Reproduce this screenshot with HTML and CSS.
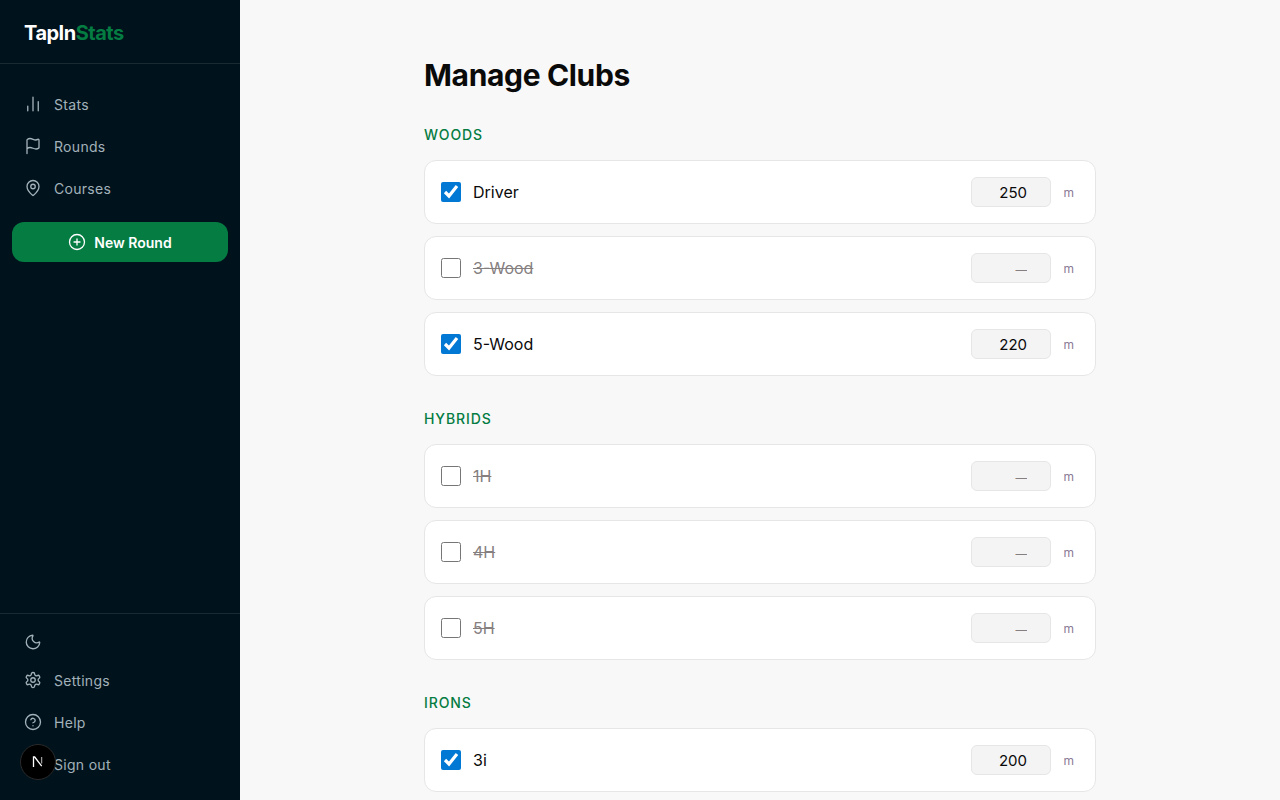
FILE: index.html
```html
<!DOCTYPE html>
<html lang="en">
<head>
<meta charset="utf-8">
<title>Manage Clubs</title>
<link rel="stylesheet" href="styles.css">
</head>
<body>
<aside class="sidebar">
  <div class="brand"><span class="brand-a">TapIn</span><span class="brand-b">Stats</span></div>
  <nav class="nav">
    <a class="nav-item"><svg class="icon" viewBox="0 0 24 24"><path d="M5 21v-6M12 21V3M19 21V9"/></svg>Stats</a>
    <a class="nav-item"><svg class="icon" viewBox="0 0 24 24"><path d="M4 22V4a1 1 0 0 1 .4-.8A6 6 0 0 1 8 2c3 0 5 2 7.333 2q2 0 3.067-.8A1 1 0 0 1 20 4v10a1 1 0 0 1-.4.8A6 6 0 0 1 16 16c-3 0-5-2-8-2a6 6 0 0 0-4 1.528"/></svg>Rounds</a>
    <a class="nav-item"><svg class="icon" viewBox="0 0 24 24"><path d="M20 10c0 4.993-5.539 10.193-7.399 11.799a1 1 0 0 1-1.202 0C9.539 20.193 4 14.993 4 10a8 8 0 0 1 16 0"/><circle cx="12" cy="10" r="3"/></svg>Courses</a>
    <a class="new-round"><svg class="icon" viewBox="0 0 24 24"><circle cx="12" cy="12" r="10"/><path d="M8 12h8M12 8v8"/></svg>New Round</a>
  </nav>
  <div class="side-foot">
    <a class="nav-item theme"><svg class="icon" viewBox="0 0 24 24"><path d="M20.985 12.486a9 9 0 1 1-9.473-9.472c.405-.022.617.46.402.803a6 6 0 0 0 8.268 8.268c.344-.215.825-.004.803.401"/></svg></a>
    <a class="nav-item"><svg class="icon" viewBox="0 0 24 24"><path d="M12.22 2h-.44a2 2 0 0 0-2 2v.18a2 2 0 0 1-1 1.73l-.43.25a2 2 0 0 1-2 0l-.15-.08a2 2 0 0 0-2.73.73l-.22.38a2 2 0 0 0 .73 2.73l.15.1a2 2 0 0 1 1 1.72v.51a2 2 0 0 1-1 1.74l-.15.09a2 2 0 0 0-.73 2.73l.22.38a2 2 0 0 0 2.73.73l.15-.08a2 2 0 0 1 2 0l.43.25a2 2 0 0 1 1 1.73V20a2 2 0 0 0 2 2h.44a2 2 0 0 0 2-2v-.18a2 2 0 0 1 1-1.73l.43-.25a2 2 0 0 1 2 0l.15.08a2 2 0 0 0 2.73-.73l.22-.39a2 2 0 0 0-.73-2.73l-.15-.08a2 2 0 0 1-1-1.74v-.5a2 2 0 0 1 1-1.74l.15-.09a2 2 0 0 0 .73-2.73l-.22-.38a2 2 0 0 0-2.73-.73l-.15.08a2 2 0 0 1-2 0l-.43-.25a2 2 0 0 1-1-1.73V4a2 2 0 0 0-2-2z"/><circle cx="12" cy="12" r="3"/></svg>Settings</a>
    <a class="nav-item"><svg class="icon" viewBox="0 0 24 24"><circle cx="12" cy="12" r="10"/><path d="M9.09 9a3 3 0 0 1 5.83 1c0 2-3 3-3 3M12 17h.01"/></svg>Help</a>
    <a class="nav-item"><span class="icon-gap"></span>Sign out</a>
  </div>
  <div class="next-badge"><svg viewBox="0 0 18 18" class="next-n"><path d="M4.5 14V4h1.2l7 9.2" /><path d="M12.6 4v6.5" class="fade"/></svg></div>
</aside>
<main class="main">
  <div class="content">
    <h1 class="title">Manage Clubs</h1>

    <section class="group">
      <h2 class="group-title">WOODS</h2>
      <div class="club"><input class="check" type="checkbox" checked><span class="name">Driver</span><input class="dist" type="text" value="250"><span class="unit">m</span></div>
      <div class="club off"><input class="check" type="checkbox"><span class="name">3-Wood</span><input class="dist" type="text" placeholder="—"><span class="unit">m</span></div>
      <div class="club"><input class="check" type="checkbox" checked><span class="name">5-Wood</span><input class="dist" type="text" value="220"><span class="unit">m</span></div>
    </section>

    <section class="group">
      <h2 class="group-title">HYBRIDS</h2>
      <div class="club off"><input class="check" type="checkbox"><span class="name">1H</span><input class="dist" type="text" placeholder="—"><span class="unit">m</span></div>
      <div class="club off"><input class="check" type="checkbox"><span class="name">4H</span><input class="dist" type="text" placeholder="—"><span class="unit">m</span></div>
      <div class="club off"><input class="check" type="checkbox"><span class="name">5H</span><input class="dist" type="text" placeholder="—"><span class="unit">m</span></div>
    </section>

    <section class="group">
      <h2 class="group-title">IRONS</h2>
      <div class="club"><input class="check" type="checkbox" checked><span class="name">3i</span><input class="dist" type="text" value="200"><span class="unit">m</span></div>
    </section>
  </div>
</main>
</body>
</html>
```
FILE: styles.css
```css
* { box-sizing: border-box; }
html, body { height: 100%; }
body {
  margin: 0;
  height: 800px;
  overflow: hidden;
  display: flex;
  background: #f8f8f8;
  color: #0a0a0a;
  font-family: Inter, "Liberation Sans", sans-serif;
}
.sidebar {
  position: relative;
  width: 240px;
  flex: none;
  height: 800px;
  background: #00131c;
  display: flex;
  flex-direction: column;
}
.brand {
  height: 64px;
  padding: 2px 24px 0;
  display: flex;
  align-items: center;
  font-size: 20px;
  font-weight: 700;
  letter-spacing: -0.5px;
  border-bottom: 1px solid #1a2a32;
}
.brand-a { color: #fff; }
.brand-b { color: #047c42; }
.nav {
  flex: 1;
  padding: 20px 12px 0;
  display: flex;
  flex-direction: column;
  gap: 2px;
}
.nav-item {
  height: 40px;
  display: flex;
  align-items: center;
  gap: 12px;
  padding: 0 12px;
  font-size: 14px;
  font-weight: 400;
  letter-spacing: 0.3px;
  color: #a3b1ba;
}
.theme { height: 33px; }
.icon {
  width: 18px;
  height: 18px;
  flex: none;
  fill: none;
  stroke: currentColor;
  stroke-width: 1.75;
  stroke-linecap: round;
  stroke-linejoin: round;
}
.icon-gap { width: 18px; flex: none; }
.new-round {
  margin-top: 12px;
  height: 40px;
  border-radius: 12px;
  background: #047c42;
  color: #fff;
  font-size: 14px;
  font-weight: 600;
  display: flex;
  align-items: center;
  justify-content: center;
  gap: 8px;
}
.side-foot {
  border-top: 1px solid #1a2a32;
  padding: 11px 12px 16px;
  display: flex;
  flex-direction: column;
  gap: 2px;
}
.next-badge {
  position: absolute;
  left: 20px;
  top: 744px;
  width: 36px;
  height: 36px;
  border-radius: 50%;
  background: #000;
  border: 1px solid #2a2a2a;
  display: flex;
  align-items: center;
  justify-content: center;
}
.next-n {
  width: 18px;
  height: 18px;
  fill: none;
  stroke: #fff;
  stroke-width: 1.3;
}
.next-n .fade { stroke: #999; }
.main { flex: 1; min-width: 0; }
.content {
  width: 672px;
  margin: 0 auto;
  padding-top: 56px;
}
.title {
  margin: 0 0 31px;
  font-size: 30px;
  line-height: 38px;
  font-weight: 700;
  letter-spacing: -0.35px;
  color: #0a0a0a;
}
.group { margin-bottom: 33px; }
.group-title {
  margin: 0 0 15px;
  font-size: 14px;
  line-height: 20px;
  font-weight: 500;
  letter-spacing: 0.9px;
  color: #047c42;
}
.club {
  height: 64px;
  margin-bottom: 12px;
  padding: 0 16px;
  background: #fff;
  border: 1px solid #e6e6e6;
  border-radius: 12px;
  display: flex;
  align-items: center;
}
.check {
  width: 20px;
  height: 20px;
  margin: 0 12px 0 0;
  accent-color: #0078d4;
  flex: none;
}
.name {
  flex: 1;
  font-size: 16px;
  color: #0a0a0a;
}
.off .name {
  color: #85807f;
  text-decoration: line-through;
}
.dist {
  width: 80px;
  height: 30px;
  padding: 0 23px 0 8px;
  text-align: right;
  border: 1px solid #e6e6e6;
  border-radius: 6px;
  background: #f4f4f4;
  font: 400 15px Inter, "Liberation Sans", sans-serif;
  color: #0a0a0a;
}
.dist::placeholder { color: #85807f; opacity: 1; font-size: 11.5px; }
.unit {
  width: 28px;
  text-align: right;
  padding-right: 5px;
  font-size: 12px;
  color: #8a7a95;
}
```
